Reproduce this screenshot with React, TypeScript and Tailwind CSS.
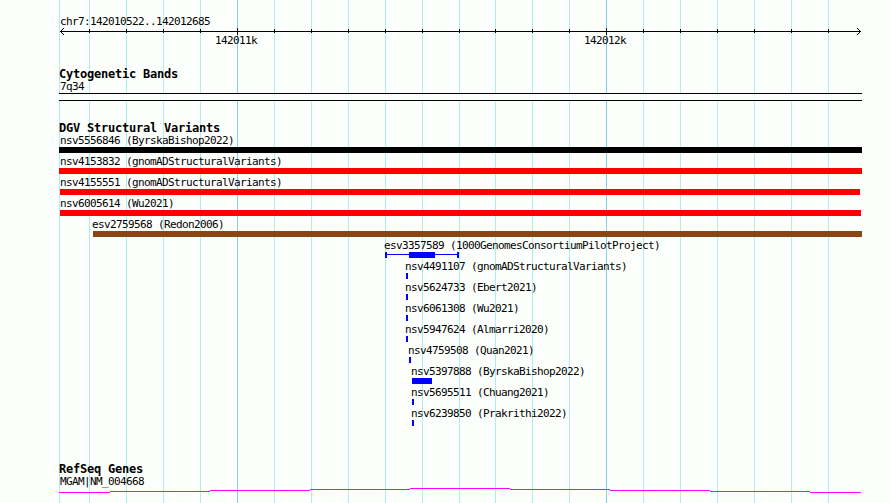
const ORIGIN = 59;

const minorLines = [
  59, 89, 126, 163, 200, 274, 311, 348, 385, 422, 459, 495, 532, 569, 643, 680, 717, 754, 791, 828,
];
const majorLines = [237, 606];

type Feature = {
  label: string;
  start: number;
  end: number;
  tone: string;
  // thin whiskers around an inner block, for variants with uncertain ends
  inner?: [number, number];
};

const features: Feature[] = [
  { label: "nsv5556846 (ByrskaBishop2022)", start: 59, end: 862, tone: "bg-black" },
  { label: "nsv4153832 (gnomADStructuralVariants)", start: 59, end: 862, tone: "bg-[#ff0000]" },
  { label: "nsv4155551 (gnomADStructuralVariants)", start: 60, end: 860, tone: "bg-[#ff0000]" },
  { label: "nsv6005614 (Wu2021)", start: 60, end: 861, tone: "bg-[#ff0000]" },
  { label: "esv2759568 (Redon2006)", start: 93, end: 862, tone: "bg-[#8b4513]" },
  {
    label: "esv3357589 (1000GenomesConsortiumPilotProject)",
    start: 385,
    end: 459,
    tone: "bg-[#0000ff]",
    inner: [409, 435],
  },
  { label: "nsv4491107 (gnomADStructuralVariants)", start: 406, end: 408, tone: "bg-[#0000ff]" },
  { label: "nsv5624733 (Ebert2021)", start: 406, end: 408, tone: "bg-[#0000ff]" },
  { label: "nsv6061308 (Wu2021)", start: 406, end: 408, tone: "bg-[#0000ff]" },
  { label: "nsv5947624 (Almarri2020)", start: 406, end: 408, tone: "bg-[#0000ff]" },
  { label: "nsv4759508 (Quan2021)", start: 409, end: 411, tone: "bg-[#0000ff]" },
  { label: "nsv5397888 (ByrskaBishop2022)", start: 412, end: 432, tone: "bg-[#0000ff]" },
  { label: "nsv5695511 (Chuang2021)", start: 412, end: 414, tone: "bg-[#0000ff]" },
  { label: "nsv6239850 (Prakrithi2022)", start: 412, end: 414, tone: "bg-[#0000ff]" },
];

function Gridlines() {
  return (
    <svg className="absolute inset-0" width="890" height="503" shapeRendering="crispEdges">
      {minorLines.map((x) => (
        <rect key={x} x={x} y="0" width="1" height="503" fill="#afeeee" />
      ))}
      {majorLines.map((x) => (
        <rect key={x} x={x} y="0" width="1" height="503" fill="#87ceeb" />
      ))}
    </svg>
  );
}

function Ruler() {
  return (
    <svg className="block" width="803" height="7" viewBox="59 28 803 7" shapeRendering="crispEdges">
      <rect x="60" y="31" width="801" height="1" />
      {minorLines.slice(1).map((x) => (
        <rect key={x} x={x} y="29" width="1" height="4" />
      ))}
      {majorLines.map((x) => (
        <rect key={x} x={x} y="28" width="1" height="7" />
      ))}
      <path d="M60 31h1v1h-1zM61 30h1v1h-1zM61 32h1v1h-1zM62 29h1v1h-1zM62 33h1v1h-1zM63 28h1v1h-1zM63 34h1v1h-1z" />
      <path d="M860 31h1v1h-1zM859 30h1v1h-1zM859 32h1v1h-1zM858 29h1v1h-1zM858 33h1v1h-1zM857 28h1v1h-1zM857 34h1v1h-1z" />
    </svg>
  );
}

function Label({ children }: { children: string }) {
  return (
    <div className="h-[15px] whitespace-pre pt-0.5 text-[11px] leading-[14px] tracking-[-0.622px]">
      {children}
    </div>
  );
}

function TrackTitle({ children }: { children: string }) {
  return (
    <h2 className="h-3 whitespace-pre pt-0.5 text-xs font-bold leading-3 tracking-[-0.224px]">
      {children}
    </h2>
  );
}

function FeatureRow({ feature }: { feature: Feature }) {
  const { label, start, end, tone, inner } = feature;
  return (
    <div className="h-[21px]">
      <div style={{ marginLeft: Math.max(start - ORIGIN - 1, 1) }}>
        <Label>{label}</Label>
      </div>
      {inner ? (
        <div
          className="flex h-1.5 items-start"
          style={{ marginLeft: start - ORIGIN, width: end - start }}
        >
          <div className={`h-1.5 w-0.5 ${tone}`} />
          <div className={`mt-0.5 h-px ${tone}`} style={{ width: inner[0] - start - 2 }} />
          <div className={`h-1.5 ${tone}`} style={{ width: inner[1] - inner[0] }} />
          <div className={`mt-0.5 h-px flex-1 ${tone}`} />
          <div className={`h-1.5 w-0.5 ${tone}`} />
        </div>
      ) : (
        <div className={`h-1.5 ${tone}`} style={{ marginLeft: start - ORIGIN, width: end - start }} />
      )}
    </div>
  );
}

export default function App() {
  return (
    <div className="relative h-[503px] w-[890px] overflow-hidden bg-[#fdfffc] font-['DejaVu_Sans_Mono',monospace] text-black">
      <Gridlines />
      <main className="relative ml-[59px] flex h-full w-[803px] flex-col">
        <header className="pt-[13px]">
          <div className="ml-px">
            <Label>chr7:142010522..142012685</Label>
          </div>
          <Ruler />
          <div className="-mt-[3px] flex h-[15px] pl-[156px]">
            <div className="w-[369px]">
              <Label>142011k</Label>
            </div>
            <Label>142012k</Label>
          </div>
        </header>

        <section className="mt-[19px] h-[35px]">
          <TrackTitle>Cytogenetic Bands</TrackTitle>
          <div className="ml-px">
            <Label>7q34</Label>
          </div>
          <div className="h-2 border-y border-black bg-[#fdfffc]" />
        </section>

        <section className="mt-[19px]">
          <TrackTitle>DGV Structural Variants</TrackTitle>
          {features.map((f) => (
            <FeatureRow key={f.label} feature={f} />
          ))}
        </section>

        <section className="mt-[35px]">
          <TrackTitle>RefSeq Genes</TrackTitle>
          <div className="ml-px">
            <Label>MGAM|NM_004668</Label>
          </div>
          <svg className="block" width="803" height="5" viewBox="59 488 803 5" shapeRendering="crispEdges">
            <path
              fill="#ff00ff"
              d="M59 492h51v1h-51zM110 491h100v1h-100zM210 490h100v1h-100zM310 489h100v1h-100zM410 488h100v1h-100zM510 489h100v1h-100zM610 490h100v1h-100zM710 491h100v1h-100zM810 492h51v1h-51z"
            />
          </svg>
        </section>
      </main>
    </div>
  );
}
